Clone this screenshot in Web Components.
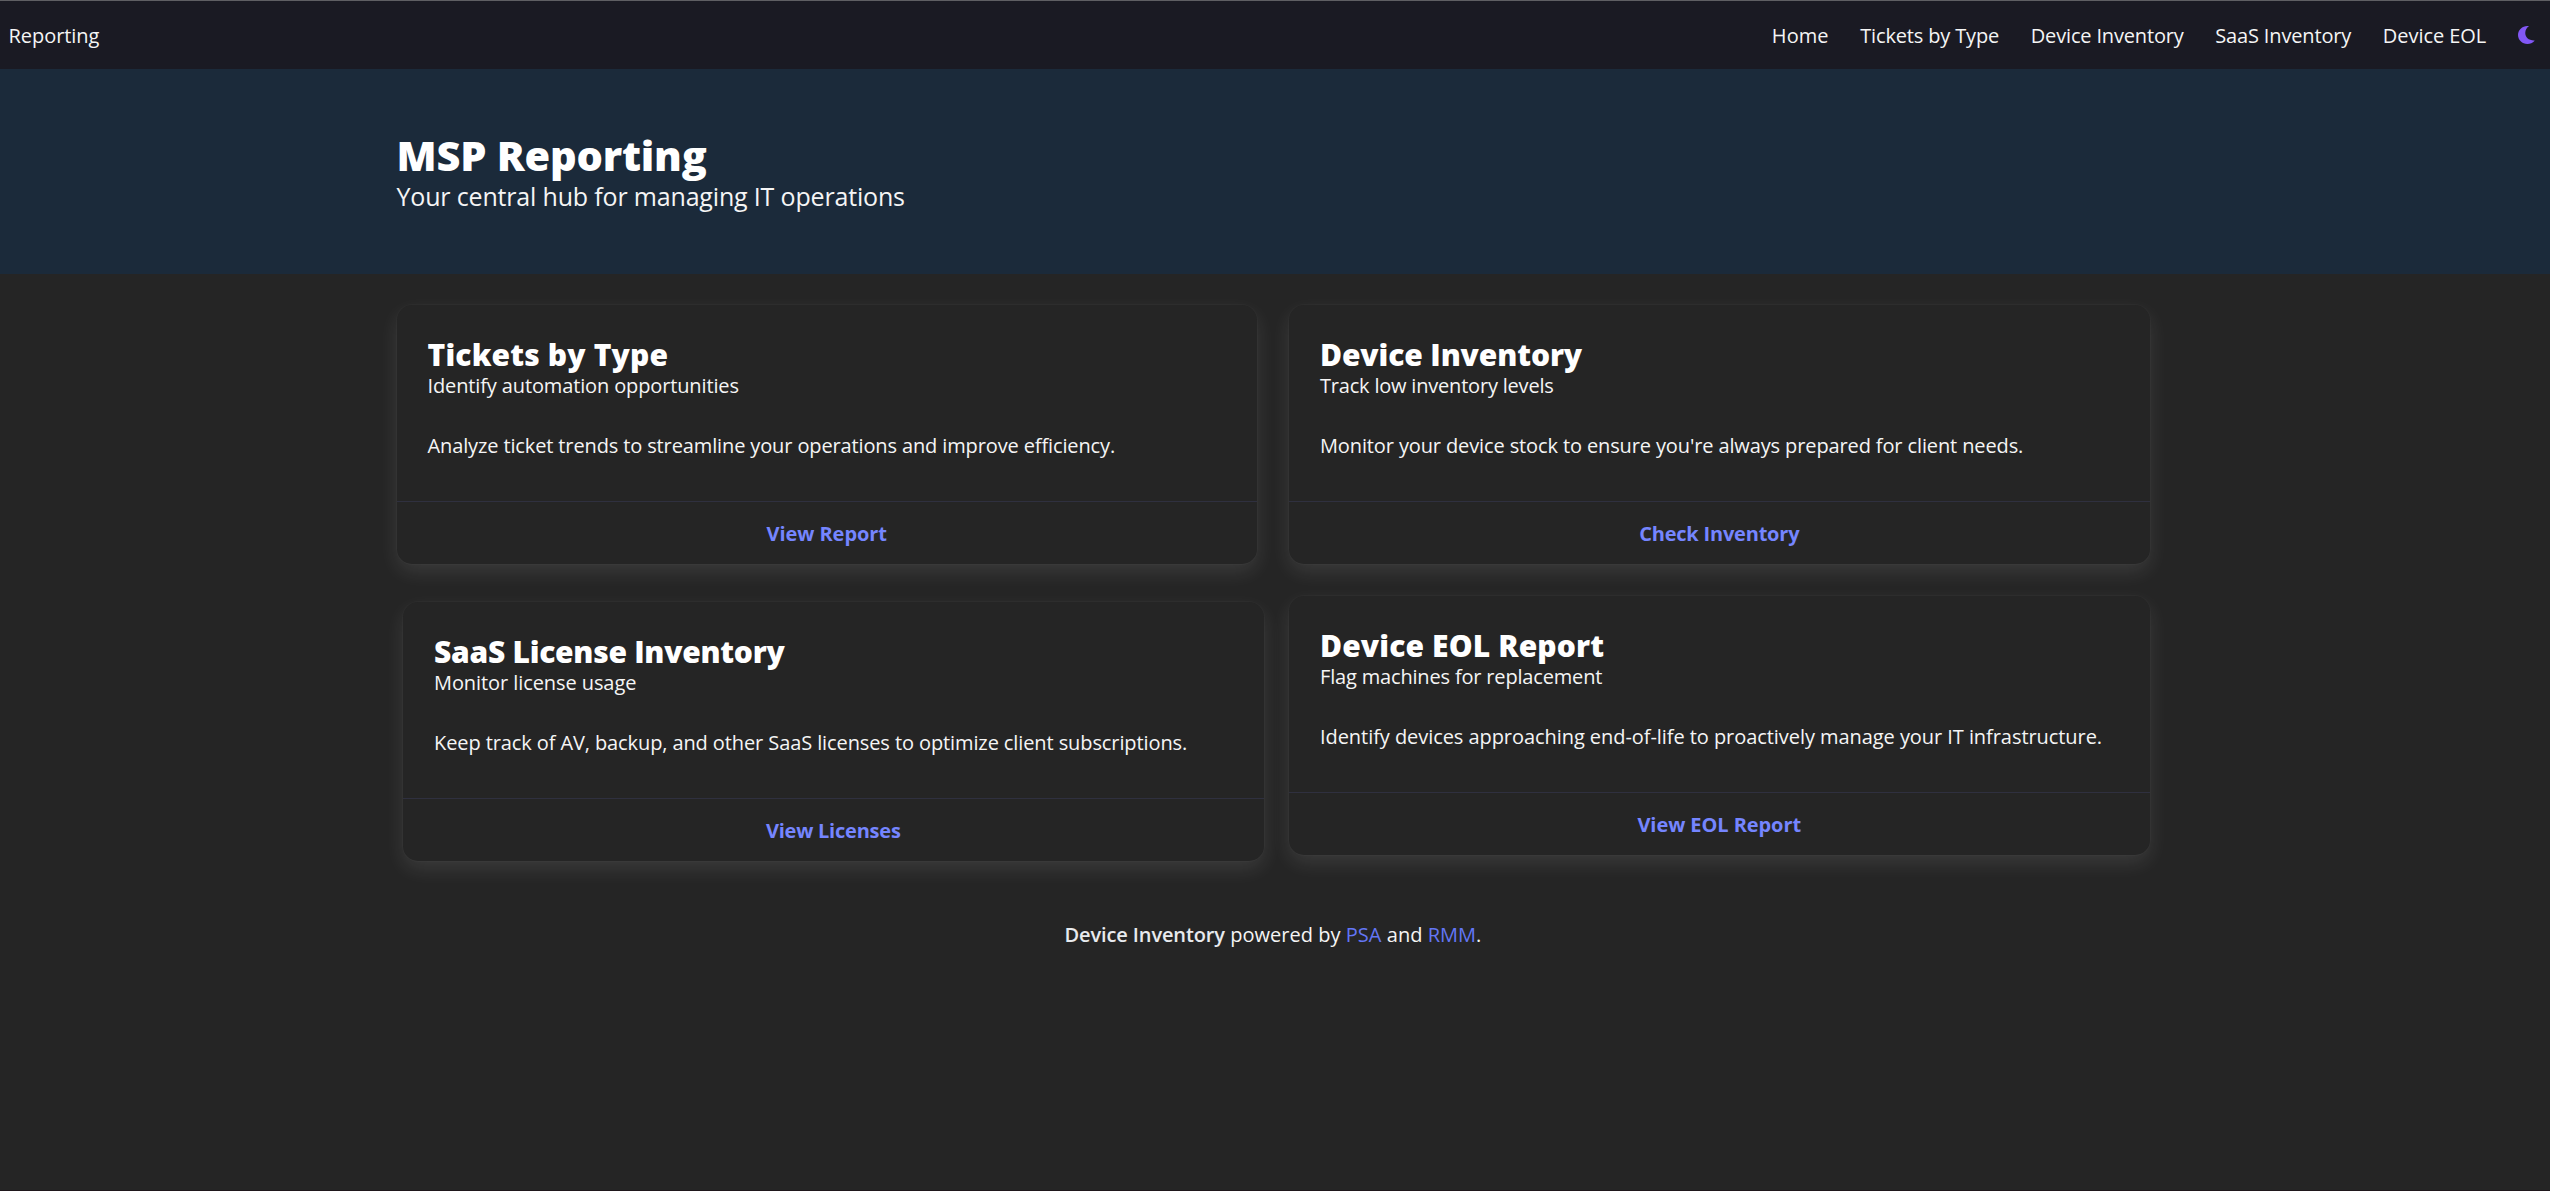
<!DOCTYPE html>
<html lang="en">
<head>
<meta charset="utf-8">
<title>MSP Reporting</title>
<style>
  html, body { margin: 0; height: 100%; }
  body {
    background: #252525;
    color: #f5f5f5;
    font-family: "Open Sans", "Noto Sans", sans-serif;
    font-size: 20px;
    --link: #7585ff;
    --strong: #ffffff;
  }
</style>
</head>
<body>
<report-app></report-app>

<template id="t-app">
  <style>
    :host { display: flex; flex-direction: column; min-height: 1190px; border-bottom: 1px solid #1f171b; }
    .grid {
      display: grid; grid-template-columns: 1fr 1fr; gap: 32px;
      width: 1753px; margin: 31px 0 0 396.500px;
    }
    .nudged { margin: 6px -6.500px -6px 6.500px; }
  </style>
  <report-nav>
    <nav-link style="letter-spacing:.05px">Home</nav-link>
    <nav-link style="letter-spacing:-.15px">Tickets by Type</nav-link>
    <nav-link style="letter-spacing:-.16px">Device Inventory</nav-link>
    <nav-link style="letter-spacing:-.15px">SaaS Inventory</nav-link>
    <nav-link style="letter-spacing:-.05px">Device EOL</nav-link>
  </report-nav>
  <report-hero>
    <span slot="title">MSP Reporting</span>
    <span slot="subtitle">Your central hub for managing IT operations</span>
  </report-hero>
  <div class="grid">
    <report-card style="--title-ls:.16px;--sub-ls:-.13px;--text-ls:-.125px;--action-ls:-.05px">
      <span slot="title">Tickets by Type</span>
      <span slot="subtitle">Identify automation opportunities</span>
      Analyze ticket trends to streamline your operations and improve efficiency.
      <span slot="action">View Report</span>
    </report-card>
    <report-card style="--title-ls:-.12px;--sub-ls:-.2px;--text-ls:-.12px;--action-ls:-.2px">
      <span slot="title">Device Inventory</span>
      <span slot="subtitle">Track low inventory levels</span>
      Monitor your device stock to ensure you're always prepared for client needs.
      <span slot="action">Check Inventory</span>
    </report-card>
    <report-card class="nudged" style="--title-ls:-.27px;--sub-ls:-.08px;--text-ls:-.1px;--action-ls:-.22px">
      <span slot="title">SaaS License Inventory</span>
      <span slot="subtitle">Monitor license usage</span>
      Keep track of AV, backup, and other SaaS licenses to optimize client subscriptions.
      <span slot="action">View Licenses</span>
    </report-card>
    <report-card style="--title-ls:.13px;--sub-ls:-.17px;--text-ls:-.06px;--action-ls:-.07px">
      <span slot="title">Device EOL Report</span>
      <span slot="subtitle">Flag machines for replacement</span>
      Identify devices approaching end-of-life to proactively manage your IT infrastructure.
      <span slot="action">View EOL Report</span>
    </report-card>
  </div>
  <report-footer></report-footer>
</template>

<template id="t-nav">
  <style>
    :host {
      display: flex; align-items: center; justify-content: space-between;
      box-sizing: border-box; height: 69px; padding: 2px 15px 0 8.500px;
      border-top: 1px solid #5f5f63; background: #1a1a23;
    }
    .brand { line-height: 24px; letter-spacing: -.05px; }
    .links { display: flex; align-items: center; }
    .toggle { display: flex; padding: 0 0 2px 16px; }
    svg { display: block; width: 17px; height: 18px; }
  </style>
  <div class="brand">Reporting</div>
  <div class="links">
    <slot></slot>
    <div class="toggle">
      <svg viewBox="0 0 17 18"><path d="M10.8 0.3C9 1.6 7.6 3.6 7.3 6.2c-.5 4.9 3.6 8.3 8.9 8.2.3 0 .5.3.2.6C14.700 17 12.200 18 9.400 18 4.200 18 0 14.100 0 9.100 0 4 4.200 0 9.400 0c.4 0 .9 0 1.300.1.2 0 .2.1.1.2z" fill="#8257f5"/></svg>
    </div>
  </div>
</template>

<template id="t-link">
  <style>
    :host { display: block; padding: 0 15.800px; line-height: 24px; white-space: nowrap; }
  </style>
  <slot></slot>
</template>

<template id="t-hero">
  <style>
    :host { display: block; box-sizing: border-box; height: 205px; padding: 63px 0 0 396.500px; background: #1b2a3a; }
    h1 { margin: 0; font-size: 41.500px; line-height: 46px; font-weight: 800; letter-spacing: -.22px; color: var(--strong); }
    p { margin: 3px 0 0; font-size: 25px; line-height: 30px; letter-spacing: -.17px; }
  </style>
  <h1><slot name="title"></slot></h1>
  <p><slot name="subtitle"></slot></p>
</template>

<template id="t-card">
  <style>
    :host {
      display: flex; flex-direction: column; height: 259px; border-radius: 15px;
      background: #252525;
      box-shadow: 0 8px 20px 0 rgba(255,255,255,.1), 0 0 0 1px rgba(255,255,255,.02);
    }
    .content { flex: 1; padding: 33px 31px 0; white-space: nowrap; }
    h2 { margin: 0; font-size: 30px; line-height: 34px; font-weight: 800; letter-spacing: var(--title-ls); color: var(--strong); }
    .sub { margin-top: 2px; line-height: 24px; letter-spacing: var(--sub-ls); }
    .text { margin-top: 33px; line-height: 30px; letter-spacing: var(--text-ls); }
    footer {
      display: flex; align-items: center; justify-content: center;
      height: 62px; border-top: 1px solid #2f303f;
      color: var(--link); font-weight: 700; letter-spacing: var(--action-ls);
    }
  </style>
  <div class="content">
    <h2><slot name="title"></slot></h2>
    <div class="sub"><slot name="subtitle"></slot></div>
    <div class="text"><slot></slot></div>
  </div>
  <footer><slot name="action"></slot></footer>
</template>

<template id="t-footer">
  <style>
    :host { display: block; margin-top: 65px; padding-right: 4px; text-align: center; line-height: 30px; letter-spacing: .03px; }
    b { font-weight: 600; color: #e8eaee; letter-spacing: -.12px; }
    a { color: #6376f5; }
  </style>
  <b>Device Inventory</b> powered by <a>PSA</a> and <a>RMM</a>.
</template>

<script>
  const define = (name, templateId) => customElements.define(name, class extends HTMLElement {
    constructor() {
      super();
      this.attachShadow({ mode: "open" })
        .append(document.getElementById(templateId).content.cloneNode(true));
    }
  });
  define("nav-link", "t-link");
  define("report-nav", "t-nav");
  define("report-hero", "t-hero");
  define("report-card", "t-card");
  define("report-footer", "t-footer");
  define("report-app", "t-app");
</script>
</body>
</html>
